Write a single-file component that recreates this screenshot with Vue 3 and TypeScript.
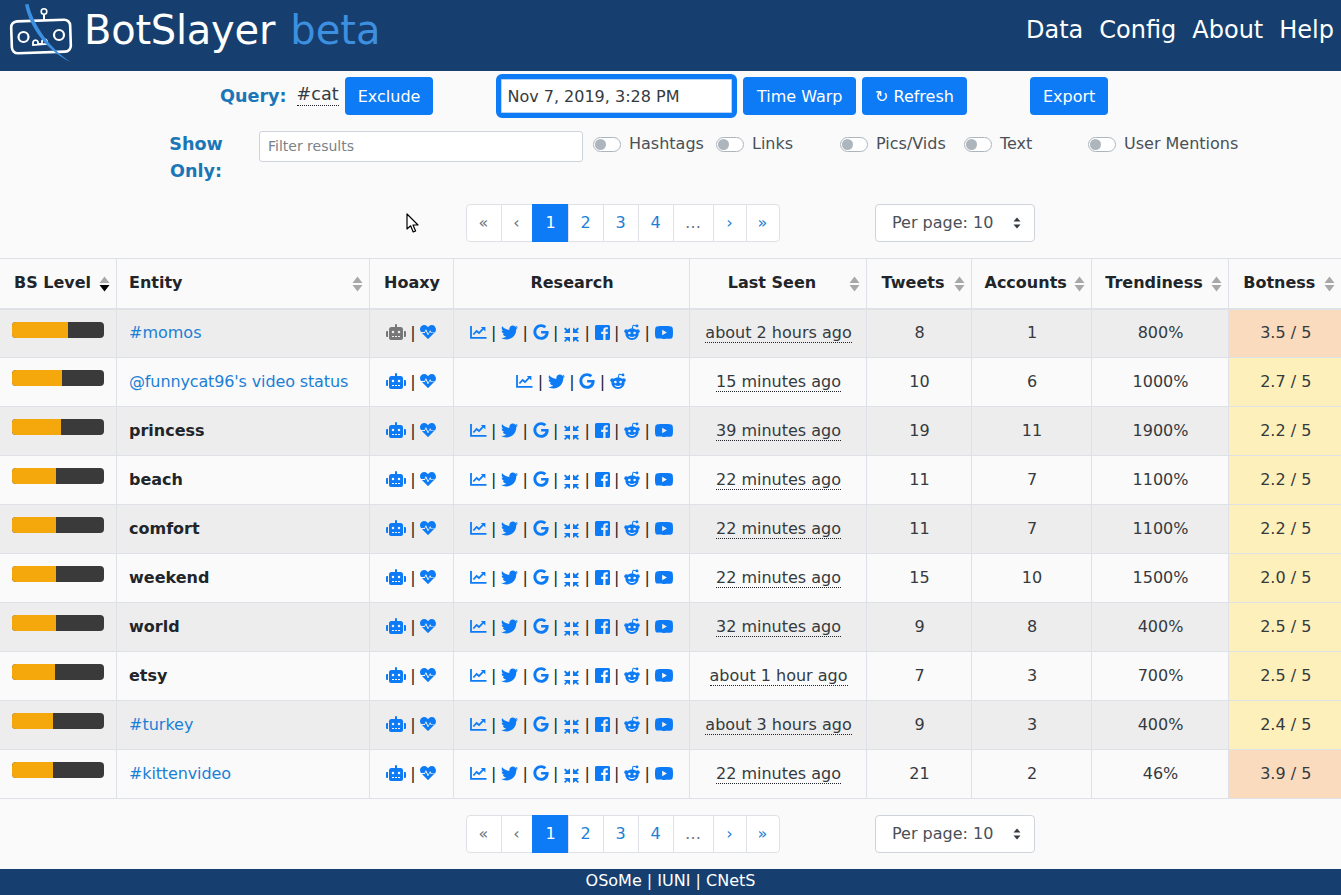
<script setup lang="ts">
interface Row { w: number; name: string; link: boolean; seen: string; tweets: number; accounts: number; trend: string; bot: string; hot: boolean; gray?: boolean; short?: boolean }
const rows: Row[] = [
  { w: 56, name: '#momos', link: true, seen: 'about 2 hours ago', tweets: 8, accounts: 1, trend: '800%', bot: '3.5 / 5', hot: true, gray: true },
  { w: 50, name: "@funnycat96's video status", link: true, seen: '15 minutes ago', tweets: 10, accounts: 6, trend: '1000%', bot: '2.7 / 5', hot: false, short: true },
  { w: 49, name: 'princess', link: false, seen: '39 minutes ago', tweets: 19, accounts: 11, trend: '1900%', bot: '2.2 / 5', hot: false },
  { w: 44, name: 'beach', link: false, seen: '22 minutes ago', tweets: 11, accounts: 7, trend: '1100%', bot: '2.2 / 5', hot: false },
  { w: 44, name: 'comfort', link: false, seen: '22 minutes ago', tweets: 11, accounts: 7, trend: '1100%', bot: '2.2 / 5', hot: false },
  { w: 44, name: 'weekend', link: false, seen: '22 minutes ago', tweets: 15, accounts: 10, trend: '1500%', bot: '2.0 / 5', hot: false },
  { w: 44, name: 'world', link: false, seen: '32 minutes ago', tweets: 9, accounts: 8, trend: '400%', bot: '2.5 / 5', hot: false },
  { w: 43, name: 'etsy', link: false, seen: 'about 1 hour ago', tweets: 7, accounts: 3, trend: '700%', bot: '2.5 / 5', hot: false },
  { w: 41, name: '#turkey', link: true, seen: 'about 3 hours ago', tweets: 9, accounts: 3, trend: '400%', bot: '2.4 / 5', hot: false },
  { w: 41, name: '#kittenvideo', link: true, seen: '22 minutes ago', tweets: 21, accounts: 2, trend: '46%', bot: '3.9 / 5', hot: true },
]
const columns = [
  { label: 'BS Level', width: 116, active: true },
  { label: 'Entity', width: 253, left: true },
  { label: 'Hoaxy', width: 84, plain: true },
  { label: 'Research', width: 236, plain: true },
  { label: 'Last Seen', width: 177 },
  { label: 'Tweets', width: 105 },
  { label: 'Accounts', width: 120 },
  { label: 'Trendiness', width: 137 },
  { label: 'Botness', width: 113 },
]
const toggles = ['Hashtags', 'Links', 'Pics/Vids', 'Text', 'User Mentions']
const pages = [
  { t: '«', k: 'muted' }, { t: '‹', k: 'muted' }, { t: '1', k: 'active' }, { t: '2', k: '' }, { t: '3', k: '' }, { t: '4', k: '' }, { t: '…', k: 'muted' }, { t: '›', k: '' }, { t: '»', k: '' },
]
</script>

<template>
  <div class="page">
    <header class="nav">
      <div class="brand">
        <svg class="logo" width="75" height="66" viewBox="0 0 75 66" fill="none">
          <path d="M44 14 V20" stroke="#fff" stroke-width="2" />
          <circle cx="44" cy="11.5" r="2.8" stroke="#fff" stroke-width="1.6" />
          <rect x="11.5" y="20.5" width="59" height="32" rx="6" stroke="#fff" stroke-width="2.6" transform="rotate(-2 41 36)" />
          <circle cx="23.5" cy="37" r="5" stroke="#fff" stroke-width="2.2" />
          <circle cx="59" cy="35" r="5" stroke="#fff" stroke-width="2.2" />
          <path d="M33 45 v-3 a2.6 2.6 0 0 1 5 0 v2 h4 v-3 a2.6 2.6 0 0 1 5 0 v3 z" stroke="#fff" stroke-width="1.8" />
          <path d="M25 4.5 L28.5 4 C33 24 49 48 70.5 62 C46 50 30 28 25 4.5 Z" fill="#3d8fe0" />
        </svg>
        <span class="brand-text"><span class="name">BotSlayer</span> <span class="beta">beta</span></span>
      </div>
      <nav class="nav-links">
        <a>Data</a><a>Config</a><a>About</a><a>Help</a>
      </nav>
    </header>

    <section class="query-row">
      <strong class="ctl-label">Query:</strong>
      <span class="query-value">#cat</span>
      <button class="btn exclude">Exclude</button>
      <input class="date" value="Nov 7, 2019, 3:28 PM" />
      <button class="btn warp">Time Warp</button>
      <button class="btn refresh">↻ Refresh</button>
      <button class="btn export">Export</button>
    </section>

    <section class="filter-row">
      <strong class="ctl-label show">Show Only:</strong>
      <input class="filter" placeholder="Filter results" />
      <div class="toggles">
        <label v-for="t in toggles" :key="t" class="toggle">
          <span class="track"><span class="knob"></span></span>
          <span>{{ t }}</span>
        </label>
      </div>
    </section>

    <div class="pager-row">
      <ul class="pager">
        <li v-for="b in pages" :key="b.t" :class="b.k">{{ b.t }}</li>
      </ul>
      <div class="per-page">Per page: 10
        <svg width="8" height="12" viewBox="0 0 8 12"><path d="M4 0.5 L7.5 4.6 H0.5 Z M4 11.5 L0.5 7.4 H7.5 Z" fill="#343a40" /></svg>
      </div>
    </div>

    <table class="grid">
      <colgroup>
        <col v-for="c in columns" :key="c.label" :style="{ width: c.width + 'px' }" />
      </colgroup>
      <thead>
        <tr>
          <th v-for="c in columns" :key="c.label" :class="{ left: c.left, first: c.active, sortable: !c.plain }">
            {{ c.label }}
            <svg v-if="!c.plain" class="sort" width="11" height="16" viewBox="0 0 11 16">
              <path d="M5.5 0.5 L10.5 7 H0.5 Z" fill="#a8a8a8" />
              <path d="M5.5 15.5 L0.5 9 H10.5 Z" :fill="c.active ? '#000' : '#a8a8a8'" />
            </svg>
          </th>
        </tr>
      </thead>
      <tbody>
        <tr v-for="r in rows" :key="r.name">
          <td class="bar-cell">
            <div class="bar"><div class="fill" :style="{ width: r.w + 'px' }"></div></div>
          </td>
          <td class="left">
            <a v-if="r.link" class="entity" :class="{ tight: r.name.length > 10 }">{{ r.name }}</a>
            <strong v-else>{{ r.name }}</strong>
          </td>
          <td>
            <div class="icons">
              <svg class="ic" :class="{ gray: r.gray }" width="20" height="16" viewBox="0 0 640 512">
                <path fill="currentColor" d="M32,224H64V416H32A31.96166,31.96166,0,0,1,0,384V256A31.96166,31.96166,0,0,1,32,224Zm512-48V448a64.06328,64.06328,0,0,1-64,64H160a64.06328,64.06328,0,0,1-64-64V176a79.974,79.974,0,0,1,80-80H288V32a32,32,0,0,1,64,0V96H464A79.974,79.974,0,0,1,544,176ZM264,256a40,40,0,1,0-40,40A39.997,39.997,0,0,0,264,256Zm-8,128H192v32h64Zm96,0H288v32h64ZM456,256a40,40,0,1,0-40,40A39.997,39.997,0,0,0,456,256Zm-8,128H384v32h64ZM640,256V384a31.96166,31.96166,0,0,1-32,32H576V224h32A31.96166,31.96166,0,0,1,640,256Z" />
              </svg>
              <span class="sep">|</span>
              <svg class="ic" width="16" height="16" viewBox="0 0 512 512">
                <path fill="currentColor" d="M320.2 243.8l-49.7 99.4c-6 12.1-23.4 11.7-28.9-.6l-56.9-126.3-30 71.7H60.6l182.5 186.5c7.1 7.3 18.6 7.3 25.7 0L451.4 288H342.3l-22.1-44.2zM473.7 73.9l-2.4-2.5c-51.5-52.6-135.8-52.6-187.4 0L256 100l-27.9-28.5c-51.5-52.7-135.9-52.7-187.4 0l-2.4 2.4C-10.4 123.6-12.5 202.3 32 256h112.4l28.9-72.1c5.5-13.8 24.9-14.2 30.9-.9L262.6 313l49.6-99.2c5.9-11.8 22.7-11.8 28.6 0l27.6 55.2H480c44.5-53.7 42.4-132.4-6.3-182.1z" />
              </svg>
            </div>
          </td>
          <td>
            <div class="icons">
              <svg class="ic" width="17" height="16" viewBox="0 0 17 16">
                <path d="M1 2 V13.8 H16.5" fill="none" stroke="currentColor" stroke-width="1.8" />
                <path d="M3.4 10.5 L6.6 7 L9 9 L13.2 4.6" fill="none" stroke="currentColor" stroke-width="1.8" />
                <path d="M10.8 3 H15.4 V7.6 Z" fill="currentColor" />
              </svg>
              <span class="sep">|</span>
              <svg class="ic" width="17" height="17" viewBox="0 0 512 512">
                <path fill="currentColor" d="M459.37 151.716c.325 4.548.325 9.097.325 13.645 0 138.72-105.583 298.558-298.558 298.558-59.452 0-114.68-17.219-161.137-47.106 8.447.974 16.568 1.299 25.34 1.299 49.055 0 94.213-16.568 130.274-44.832-46.132-.975-84.792-31.188-98.112-72.772 6.498.974 12.995 1.624 19.818 1.624 9.421 0 18.843-1.3 27.614-3.573-48.081-9.747-84.143-51.98-84.143-102.985v-1.299c13.969 7.797 30.214 12.67 47.431 13.319-28.264-18.843-46.781-51.005-46.781-87.391 0-19.492 5.197-37.36 14.294-52.954 51.655 63.675 129.3 105.258 216.365 109.807-1.624-7.797-2.599-15.918-2.599-24.04 0-57.828 46.782-104.934 104.934-104.934 30.213 0 57.502 12.67 76.67 33.137 23.715-4.548 46.456-13.32 66.599-25.34-7.798 24.366-24.366 44.833-46.132 57.827 21.117-2.273 41.584-8.122 60.426-16.243-14.292 20.791-32.161 39.308-52.628 54.253z" />
              </svg>
              <span class="sep">|</span>
              <svg class="ic" width="16" height="16" viewBox="0 0 488 512">
                <path fill="currentColor" d="M488 261.8C488 403.3 391.1 504 248 504 110.8 504 0 393.2 0 256S110.8 8 248 8c66.8 0 123 24.5 166.3 64.9l-67.5 64.9C258.5 52.6 94.3 116.6 94.3 256c0 86.5 69.1 156.6 153.7 156.6 98.2 0 135-70.4 140.8-106.9H248v-85.3h236.1c2.3 12.7 3.9 24.9 3.9 41.4z" />
              </svg>
              <template v-if="!r.short">
                <span class="sep">|</span>
                <svg class="ic arrows" width="17" height="16" viewBox="0 0 17 16">
                  <path fill="currentColor" d="M7 1.5 V7 H1 L3 5 L1 2.8 L2.4 1.5 L4.4 3.6 Z M10 1.5 V7 H16 L14 5 L16 2.8 L14.6 1.5 L12.6 3.6 Z M7 16 V11 H1 L3 13 L1 14.8 L2.2 16 L4.4 14 Z M10 16 V11 H16 L14 13 L16 14.8 L14.8 16 L12.6 14 Z" />
                </svg>
                <span class="sep">|</span>
                <svg class="ic" width="15" height="15" viewBox="0 32 448 448" preserveAspectRatio="none">
                  <path fill="currentColor" d="M448 80v352c0 26.5-21.5 48-48 48h-85.3V302.8h60.6l8.7-67.6h-69.3V192c0-19.6 5.4-32.9 33.5-32.9H384V98.7c-6.2-.8-27.4-2.7-52.2-2.7-51.6 0-87 31.5-87 89.4v49.9H184v67.6h60.9V480H48c-26.5 0-48-21.5-48-48V80c0-26.5 21.5-48 48-48h352c26.5 0 48 21.5 48 48z" />
                </svg>
              </template>
              <span class="sep">|</span>
              <svg class="ic" width="16" height="16" viewBox="0 0 16 16">
                <path d="M8.2 5 L9 1.2 L12.4 1.8" fill="none" stroke="currentColor" stroke-width="1" />
                <circle cx="13" cy="1.9" r="1.4" fill="currentColor" />
                <circle cx="2.2" cy="7.2" r="1.9" fill="currentColor" />
                <circle cx="13.8" cy="7.2" r="1.9" fill="currentColor" />
                <path fill="currentColor" fill-rule="evenodd" d="M8 4.4c3.9 0 6.6 2.3 6.6 5.4S11.9 16 8 16 1.4 12.9 1.4 9.8 4.1 4.4 8 4.4zM5.4 7.7a1.3 1.3 0 1 0 0 2.6 1.3 1.3 0 0 0 0-2.6zm5.2 0a1.3 1.3 0 1 0 0 2.6 1.3 1.3 0 0 0 0-2.6zM5 12.1l-.5.6c1 .9 2.2 1.2 3.5 1.2s2.5-.3 3.5-1.2l-.5-.6c-.8.7-1.9 1-3 1s-2.2-.3-3-1z" />
              </svg>
              <template v-if="!r.short">
                <span class="sep">|</span>
                <svg class="ic" width="18" height="13" viewBox="15 64 546 384" preserveAspectRatio="none">
                  <path fill="currentColor" d="M549.655 124.083c-6.281-23.65-24.787-42.276-48.284-48.597C458.781 64 288 64 288 64S117.22 64 74.629 75.486c-23.497 6.322-42.003 24.947-48.284 48.597-11.412 42.867-11.412 132.305-11.412 132.305s0 89.438 11.412 132.305c6.281 23.65 24.787 41.5 48.284 47.821C117.22 448 288 448 288 448s170.78 0 213.371-11.486c23.497-6.321 42.003-24.171 48.284-47.821 11.412-42.867 11.412-132.305 11.412-132.305s0-89.438-11.412-132.305zm-317.51 213.508V175.185l142.739 81.205-142.739 81.201z" />
                </svg>
              </template>
            </div>
          </td>
          <td><span class="seen">{{ r.seen }}</span></td>
          <td>{{ r.tweets }}</td>
          <td>{{ r.accounts }}</td>
          <td>{{ r.trend }}</td>
          <td :class="r.hot ? 'hot' : 'warm'">{{ r.bot }}</td>
        </tr>
      </tbody>
    </table>

    <div class="pager-row bottom">
      <ul class="pager">
        <li v-for="b in pages" :key="b.t" :class="b.k">{{ b.t }}</li>
      </ul>
      <div class="per-page">Per page: 10
        <svg width="8" height="12" viewBox="0 0 8 12"><path d="M4 0.5 L7.5 4.6 H0.5 Z M4 11.5 L0.5 7.4 H7.5 Z" fill="#343a40" /></svg>
      </div>
    </div>

    <footer class="foot">OSoMe | IUNI | CNetS</footer>

    <svg class="cursor" width="14" height="21" viewBox="0 0 14 21">
      <path d="M1 1 V16 L4.6 12.8 L7.2 19 L9.6 18 L7 12 H12 Z" fill="#fff" stroke="#000" stroke-width="1.2" stroke-linejoin="round" />
    </svg>
  </div>
</template>

<style scoped>
.page {
  position: relative;
  width: 1341px;
  height: 895px;
  overflow: hidden;
  background: #fafafa;
  color: #212529;
  font-family: "DejaVu Sans", sans-serif;
  font-size: 16px;
  line-height: 24px;
}
.nav {
  height: 71px;
  background: #163f6f;
  display: flex;
  justify-content: space-between;
  align-items: flex-start;
  color: #fff;
}
.brand { display: flex; align-items: flex-start; }
.logo { display: block; margin-right: 9px; }
.brand-text { font-size: 40px; line-height: 60px; }
.name { letter-spacing: -0.25px; margin-right: 2.5px; }
.beta { color: #3d8fe0; }
.nav-links { display: flex; gap: 16px; padding: 12px 7px 0 0; font-size: 24px; line-height: 36px; }
.query-row {
  display: flex;
  align-items: center;
  height: 44px;
  margin-top: 3px;
  padding-left: 220px;
}
.ctl-label { font-size: 17.6px; color: #1b76b8; }
.query-value {
  margin-left: 10px;
  margin-top: -3px;
  font-size: 17.6px;
  line-height: 22px;
  color: #343a40;
  border-bottom: 1px dotted #212529;
}
.btn {
  height: 38px;
  padding: 0 13px;
  border: 0;
  border-radius: 4px;
  background: #0d7bf5;
  color: #fff;
  font: 16px "DejaVu Sans", sans-serif;
}
.exclude { margin-left: 6px; }
.date {
  box-sizing: border-box;
  width: 241px;
  height: 44px;
  margin-left: 63px;
  padding: 0 6px;
  background: #fff;
  border: 5px solid #0d7bf5;
  border-radius: 6px;
  box-shadow: inset 0 0 0 1px #b9d4f2;
  outline: 0;
  color: #343a40;
  font: 16px "DejaVu Sans", sans-serif;
}
.warp { margin-left: 6px; padding: 0 13.5px; }
.refresh { margin-left: 6px; }
.export { margin-left: 63px; }
.filter-row {
  display: flex;
  align-items: flex-start;
  height: 73px;
  margin-top: 13px;
}
.show {
  width: 54px;
  margin-left: 169px;
  margin-right: 36px;
  text-align: center;
  line-height: 27px;
  flex: none;
}
.filter {
  box-sizing: border-box;
  width: 324px;
  height: 31px;
  padding: 0 8px 2px;
  background: #fff;
  border: 1px solid #ced4da;
  border-radius: 3px;
  outline: 0;
  font: 14px "DejaVu Sans", sans-serif;
}
.filter::placeholder { color: #7b8287; opacity: 1; }
.toggles { display: flex; margin-left: 10px; margin-top: 1px; }
.toggle {
  display: flex;
  align-items: center;
  width: 124px;
  gap: 8px;
  color: #495057;
  white-space: nowrap;
}
.toggle:first-child { width: 123px; }
.track {
  box-sizing: border-box;
  width: 28px;
  height: 15px;
  flex: none;
  border: 1px solid #adb5bd;
  border-radius: 8px;
  background: #fff;
  display: block;
  padding: 1px;
}
.knob { display: block; width: 11px; height: 11px; border-radius: 50%; background: #adb5bd; }
.pager-row { display: flex; height: 38px; }
.bottom { margin-top: 16px; }
.pager {
  display: grid;
  grid-template-columns: 34px 31px 36px 35px 35px 35px 40px 33px 33px;
  list-style: none;
  margin: 0 0 0 466px;
  padding: 0;
  background: #fff;
  border: 1px solid #dee2e6;
  border-radius: 4px;
  box-sizing: border-box;
  width: 314px;
  height: 38px;
}
.pager li {
  display: flex;
  align-items: center;
  justify-content: center;
  padding-right: 1px;
  border-left: 1px solid #dee2e6;
  color: #1b7fd6;
}
.pager li:first-child { border-left: 0; }
.pager li.muted { color: #6c757d; }
.pager li.active { background: #0d7bf5; color: #fff; margin: -1px 0; border-left-color: #0d7bf5; padding-right: 0; }
.per-page {
  box-sizing: border-box;
  width: 160px;
  height: 38px;
  margin-left: 95px;
  padding: 0 13px 0 16px;
  display: flex;
  align-items: center;
  justify-content: space-between;
  background: #fff;
  border: 1px solid #ced4da;
  border-radius: 4px;
  color: #495057;
}
.grid {
  width: 1341px;
  margin-top: 16px;
  table-layout: fixed;
  border-collapse: collapse;
}
.grid th, .grid td {
  box-sizing: border-box;
  padding: 0 11px 0 13px;
  border: 1px solid #dee2e6;
  text-align: center;
  font-weight: normal;
  white-space: nowrap;
}
.grid th:first-child, .grid td:first-child { border-left: 0; }
.grid th:last-child, .grid td:last-child { border-right: 0; }
.grid th {
  position: relative;
  height: 50px;
  border-bottom: 2px solid #dee2e6;
  font-weight: bold;
}
.grid th.sortable:not(.left) { padding-right: 24px; }
.grid th.first { padding: 0 0 0 14px; text-align: left; }
.sort { position: absolute; right: 6px; top: 17px; }
.grid td { height: 49px; color: #343a40; }
.grid .left { text-align: left; padding-left: 12.5px; }
.grid tbody tr:nth-child(odd) { background: #ededed; }
.grid td strong { color: #212529; }
.grid td.bar-cell { vertical-align: top; padding-left: 12px; }
.bar {
  width: 92px;
  height: 16px;
  margin-top: 12px;
  background: #3a3a3a;
  border-radius: 4px;
  overflow: hidden;
}
.fill { height: 100%; background: #f5a80b; }
.entity { color: #1b7fd6; }
.tight { letter-spacing: -0.13px; }
.icons { display: flex; align-items: center; justify-content: center; margin: 0 1px 0 -1px; }
.ic { color: #0d7bf5; display: block; flex: none; margin-bottom: 2px; overflow: visible; }
.ic.arrows { margin-bottom: -1px; }
.ic.gray { color: #777; }
.sep { width: 14.5px; text-align: center; flex: none; color: #212529; }
.seen { border-bottom: 1px dotted #212529; }
.warm { background: #fdf0ba; }
.hot { background: #fbdbbe; }
.foot {
  position: absolute;
  left: 0;
  right: 0;
  bottom: 0;
  height: 26px;
  line-height: 24px;
  background: #163f6f;
  color: #fff;
  text-align: center;
}
.cursor { position: absolute; left: 406px; top: 213px; }
</style>

<style>
html, body { margin: 0; padding: 0; background: #fafafa; }
</style>
